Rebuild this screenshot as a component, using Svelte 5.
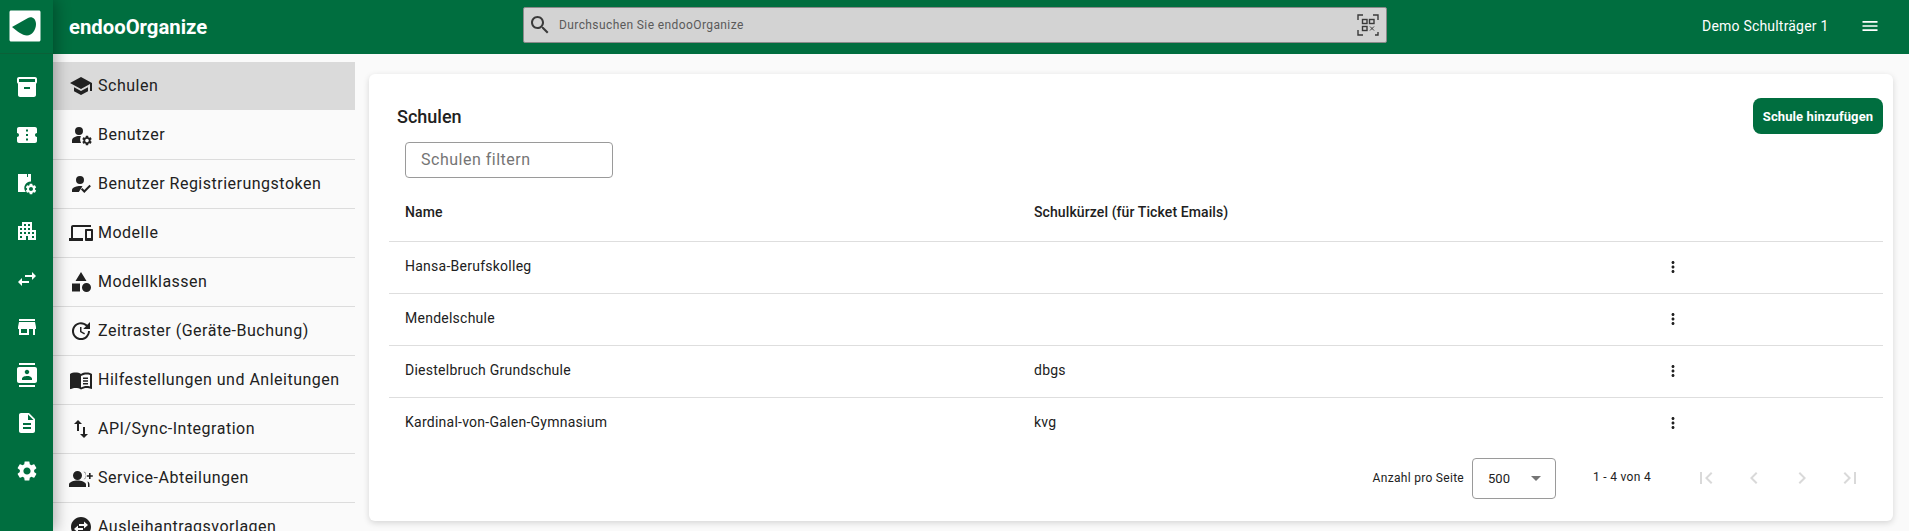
<script lang="ts">
	const gear = 'M19.14 12.94c.04-.3.06-.61.06-.94 0-.32-.02-.64-.07-.94l2.03-1.58c.18-.14.23-.41.12-.61l-1.92-3.32c-.12-.22-.37-.29-.59-.22l-2.39.96c-.5-.38-1.03-.7-1.62-.94l-.36-2.54c-.04-.24-.24-.41-.48-.41h-3.84c-.24 0-.43.17-.47.41l-.36 2.54c-.59.24-1.13.57-1.62.94l-2.39-.96c-.22-.08-.47 0-.59.22L2.74 8.87c-.12.21-.08.47.12.61l2.03 1.58c-.05.3-.09.63-.09.94s.02.64.07.94l-2.03 1.58c-.18.14-.23.41-.12.61l1.92 3.32c.12.22.37.29.59.22l2.39-.96c.5.38 1.03.7 1.62.94l.36 2.54c.05.24.24.41.48.41h3.84c.24 0 .44-.17.47-.41l.36-2.54c.59-.24 1.13-.56 1.62-.94l2.39.96c.22.08.47 0 .59-.22l1.92-3.32c.12-.22.07-.47-.12-.61l-2.01-1.58zM12 15.6c-1.98 0-3.6-1.62-3.6-3.6s1.62-3.6 3.6-3.6 3.6 1.62 3.6 3.6-1.62 3.6-3.6 3.6z';

	const railIcons = [
		'M20 2H4c-1 0-2 .9-2 2v3.01c0 .72.43 1.34 1 1.69V20c0 1.1 1.1 2 2 2h14c.9 0 2-.9 2-2V8.7c.57-.35 1-.96 1-1.69V4c0-1.1-1-2-2-2zm-5 12H9v-2h6v2zm5-7H4V4l16-.02V7z',
		'M22 10V6c0-1.11-.9-2-2-2H4c-1.1 0-1.99.89-1.99 2v4c1.1 0 1.99.9 1.99 2s-.89 2-2 2v4c0 1.1.9 2 2 2h16c1.1 0 2-.9 2-2v-4c-1.1 0-2-.9-2-2s.9-2 2-2zm-9 7.5h-2v-2h2v2zm0-4.5h-2v-2h2v2zm0-4.5h-2v-2h2v2z',
		'M3 3h9v3h1V3h3v7.400a6.500 6.500 0 0 0-5.200 10.600H3V3zm9 3h1v2h-1V6z',
		'M17 11V3H7v4H3v14h8v-4h2v4h8V11h-4zM7 19H5v-2h2v2zm0-4H5v-2h2v2zm0-4H5V9h2v2zm4 4H9v-2h2v2zm0-4H9V9h2v2zm0-4H9V5h2v2zm4 8h-2v-2h2v2zm0-4h-2V9h2v2zm0-4h-2V5h2v2zm4 12h-2v-2h2v2zm0-4h-2v-2h2v2z',
		'M6.99 11L3 15l3.99 4v-3H14v-2H6.99v-3zM21 9l-3.99-4v3H10v2h7.01v3L21 9z',
		'M20 4H4v2h16V4zm1 10v-2l-1-5H4l-1 5v2h1v6h10v-6h4v6h2v-6h1zm-9 4H6v-4h6v4z',
		'M20 0H4v2h16V0zM4 24h16v-2H4v2zM20 4H4c-1.1 0-2 .9-2 2v12c0 1.1.9 2 2 2h16c1.1 0 2-.9 2-2V6c0-1.1-.9-2-2-2zm-8 2.75c1.24 0 2.25 1.01 2.25 2.25s-1.01 2.25-2.25 2.25S9.75 10.24 9.75 9 10.76 6.75 12 6.75zM17 17H7v-1.5c0-1.67 3.33-2.5 5-2.5s5 .83 5 2.5V17z',
		'M14 2H6c-1.1 0-1.99.9-1.99 2L4 20c0 1.1.89 2 1.99 2H18c1.1 0 2-.9 2-2V8l-6-6zm2 16H8v-2h8v2zm0-4H8v-2h8v2zm-3-5V3.5L18.5 9H13z',
		gear
	];

	const navItems = [
		{ label: 'Schulen', active: true, d: 'M12 3L1 9l11 6 9-4.91V17h2V9L12 3zM5 13.18v4L12 21l7-3.82v-4L12 17l-7-3.82z' },
		{ label: 'Benutzer', d: 'M10 4a4 4 0 1 1 0 8 4 4 0 0 1 0-8zM3 20v-2.6c0-2.6 4-4.4 7-4.4.6 0 1.3.1 2 .2-.6 1-.9 2-.9 3.3 0 1.3.4 2.5 1 3.500H3z', gear: true },
		{ label: 'Benutzer Registrierungstoken', d: 'M11 4a4 4 0 1 1 0 8 4 4 0 0 1 0-8zM3 20v-2c0-2.7 5.3-4 8-4 .7 0 1.6.1 2.5.3L9.8 20H3zm12.300 1l-3.400-3.500 1.400-1.400 2 2 5.200-5.300 1.400 1.400-6.600 6.800z' },
		{ label: 'Modelle', d: 'M4 6h18V4H4c-1.1 0-2 .9-2 2v11H0v3h14v-3H4V6zm19 2h-6c-.55 0-1 .45-1 1v10c0 .55.45 1 1 1h6c.55 0 1-.45 1-1V9c0-.55-.45-1-1-1zm-1 9h-4v-7h4v7z' },
		{ label: 'Modellklassen', d: 'M12 2l-5.500 9h11L12 2zM3 13.500h8v8H3v-8zM17.500 13a4.500 4.500 0 1 1 0 9 4.500 4.500 0 0 1 0-9z' },
		{ label: 'Zeitraster (Geräte-Buchung)', d: 'M21 10.12h-6.78l2.74-2.82c-2.73-2.7-7.15-2.8-9.88-.1-2.73 2.71-2.73 7.08 0 9.79s7.15 2.71 9.88 0C18.32 15.65 19 14.08 19 12.1h2c0 1.98-.88 4.55-2.64 6.29-3.51 3.48-9.21 3.48-12.72 0-3.5-3.47-3.53-9.11-.02-12.58s9.14-3.47 12.65 0L21 3v7.12zM12.5 8v4.25l3.5 2.08-.72 1.21L11 13V8h1.5z' },
		{ label: 'Hilfestellungen und Anleitungen', d: 'M21 5c-1.11-.35-2.33-.5-3.5-.5-1.95 0-4.05.4-5.5 1.5-1.45-1.1-3.55-1.5-5.5-1.5S2.45 4.9 1 6v14.65c0 .25.25.5.5.5.1 0 .15-.05.25-.05C3.1 20.45 5.05 20 6.5 20c1.95 0 4.05.4 5.5 1.5 1.35-.85 3.8-1.5 5.5-1.5 1.65 0 3.35.3 4.75 1.05.1.05.15.05.25.05.25 0 .5-.25.5-.5V6c-.6-.45-1.25-.75-2-1zm0 13.5c-1.1-.35-2.3-.5-3.5-.5-1.7 0-4.15.65-5.5 1.5V8c1.35-.85 3.8-1.5 5.5-1.5 1.2 0 2.4.15 3.5.5v11.5zM14 9.500h5V11h-5V9.500zm0 2.700h5v1.500h-5v-1.500zm0 2.700h5v1.500h-5v-1.500z' },
		{ label: 'API/Sync-Integration', d: 'M16 17.01V10h-2v7.01h-3L15 21l4-3.99h-3zM9 3L5 6.99h3V14h2V6.99h3L9 3z' },
		{ label: 'Service-Abteilungen', d: 'M8.500 5a4.500 4.500 0 1 1 0 9 4.500 4.500 0 0 1 0-9zM0 21v-2.500C0 16 5 14.500 8.500 14.500S17 16 17 18.500V21H0zM14.500 13.500a4.500 4.500 0 0 0 0-8c2 .2 2.500 2 2.500 4s-.5 3.800-2.500 4zM18.500 15.500c1.500.7 2 1.500 2 3V21H19v-2.500c0-1.200-.2-2.200-.5-3zM20 13v-2.200h-2.200V9.200H20V7h1.600v2.200h2.200v1.600h-2.200V13H20z' },
		{ label: 'Ausleihantragsvorlagen', d: 'M12 2C6.48 2 2 6.48 2 12s4.48 10 10 10 10-4.48 10-10S17.52 2 12 2zm3 4.500L19 10l-4 3.500V11h-5V9h5V6.500zm-6 11L5 14l4-3.500V13h5v2H9v2.500z' }
	];

	const schools = [
		{ name: 'Hansa-Berufskolleg', code: '' },
		{ name: 'Mendelschule', code: '' },
		{ name: 'Diestelbruch Grundschule', code: 'dbgs' },
		{ name: 'Kardinal-von-Galen-Gymnasium', code: 'kvg' }
	];

	const pageIcons = [
		'M18.41 16.59L13.82 12l4.59-4.59L17 6l-6 6 6 6zM6 6h2v12H6z',
		'M15.41 7.41L14 6l-6 6 6 6 1.41-1.41L10.83 12z',
		'M10 6L8.59 7.41 13.17 12l-4.58 4.59L10 18l6-6z',
		'M5.59 7.41L10.18 12l-4.59 4.59L7 18l6-6-6-6zM16 6h2v12h-2z'
	];
</script>

<div class="app">
	<aside class="rail">
		<div class="logo">
			<svg viewBox="0 0 32 32" width="32" height="32">
				<path fill="#fff" d="M2 .5h28c.8 0 1.500.7 1.500 1.500v28c0 .8-.7 1.500-1.500 1.500H2c-.8 0-1.500-.7-1.500-1.500V2C.5 1.200 1.200.5 2 .5z" />
				<path fill="#006e3f" d="M3 17L19 8C23 6 27 9 27 14 27 20 23 25.500 18 25.500 13 25.500 8 21 3 17z" />
			</svg>
		</div>
		<nav class="rail-nav">
			{#each railIcons as d, i}
				<div class="rail-item">
					<svg viewBox="0 0 24 24" width="24" height="24">
						<path fill="#fff" {d} />
						{#if i === 2}
							<path fill="#fff" transform="translate(9.400 11.400) scale(.55)" d={gear} />
						{/if}
					</svg>
				</div>
			{/each}
		</nav>
	</aside>

	<div class="main">
		<header class="topbar">
			<div class="brand">endooOrganize</div>
			<div class="search">
				<svg class="search-icon" viewBox="0 0 24 24" width="24" height="24">
					<path fill="#3a3a3a" d="M15.500 14h-.79l-.28-.27C15.410 12.590 16 11.110 16 9.500 16 5.910 13.090 3 9.500 3S3 5.910 3 9.500 5.910 16 9.500 16c1.610 0 3.090-.59 4.230-1.570l.27.28v.79l5 4.990L20.490 19l-4.990-5zm-6 0C7.010 14 5 11.990 5 9.500S7.010 5 9.500 5 14 7.010 14 9.500 11.990 14 9.500 14z" />
				</svg>
				<span class="search-text">Durchsuchen Sie endooOrganize</span>
				<svg class="qr" viewBox="0 0 24 24" width="24" height="24" fill="none" stroke="#3a3a3a" stroke-width="1.400">
					<path d="M2 7V2h5M17 2h5v5M2 17v5h5M22 19v3h-3" />
					<rect x="6.500" y="6.500" width="4.500" height="4" />
					<rect x="13.500" y="6.500" width="4.500" height="4" />
					<rect x="6.500" y="13.500" width="4.500" height="4" />
					<path stroke-width="1" d="M14 13.500l4 4M18 13.500l-4 4" />
				</svg>
			</div>
			<div class="account">
				<span class="tenant">Demo Schulträger 1</span>
				<svg viewBox="0 0 24 24" width="20" height="20"><path fill="#fff" d="M3 18h18v-2H3v2zm0-5h18v-2H3v2zm0-7v2h18V6H3z" /></svg>
			</div>
		</header>

		<div class="body">
			<nav class="sidebar">
				{#each navItems as item}
					<div class={['nav-item', { active: item.active }]}>
						<svg viewBox="0 0 24 24" width="24" height="24">
							<path fill="#212121" d={item.d} />
							{#if item.gear}
								<path fill="#212121" transform="translate(12 11.500) scale(.5)" d={gear} />
							{/if}
						</svg>
						<span>{item.label}</span>
					</div>
				{/each}
			</nav>

			<main class="content">
				<section class="card">
					<div class="card-head">
						<div class="card-title">
							<h2>Schulen</h2>
							<div class="filter">Schulen filtern</div>
						</div>
						<button class="add">Schule hinzufügen</button>
					</div>

					<div class="table">
						<div class="row head">
							<div>Name</div>
							<div>Schulkürzel (für Ticket Emails)</div>
							<div></div>
						</div>
						{#each schools as school}
							<div class="row">
								<div>{school.name}</div>
								<div>{school.code}</div>
								<div class="more">
									<svg viewBox="0 0 24 24" width="18" height="18"><path fill="#212121" d="M12 8c1.100 0 2-.9 2-2s-.9-2-2-2-2 .9-2 2 .9 2 2 2zm0 2c-1.100 0-2 .9-2 2s.9 2 2 2 2-.9 2-2-.9-2-2-2zm0 6c-1.100 0-2 .9-2 2s.9 2 2 2 2-.9 2-2-.9-2-2-2z" /></svg>
								</div>
							</div>
						{/each}
					</div>

					<div class="paginator">
						<span class="per-page">Anzahl pro Seite</span>
						<div class="select">
							<span>500</span>
							<i class="caret"></i>
						</div>
						<span class="range">1 - 4 von 4</span>
						<div class="pages">
							{#each pageIcons as d}
								<svg viewBox="0 0 24 24" width="24" height="24"><path fill="#d9d9d9" {d} /></svg>
							{/each}
						</div>
					</div>
				</section>
			</main>
		</div>
	</div>
</div>

<style>
	:global(body) {
		margin: 0;
		background: #fafafa;
		font-family: Roboto, 'Liberation Sans', sans-serif;
		color: #212121;
	}

	.app {
		display: flex;
		height: 531px;
		overflow: hidden;
	}

	.rail {
		position: relative;
		z-index: 2;
		flex: 0 0 53px;
		background: #006e3f;
		box-shadow: 3px 0 14px rgba(0, 0, 0, 0.3);
	}

	.logo {
		display: flex;
		align-items: center;
		justify-content: center;
		height: 54px;
		padding: 0 3px 1px 0;
		border-bottom: 1px solid #0b6138;
		box-sizing: border-box;
	}

	.rail-nav {
		display: flex;
		flex-direction: column;
		padding-top: 8.500px;
	}

	.rail-item {
		display: flex;
		align-items: center;
		justify-content: center;
		height: 48px;
	}

	.main {
		flex: 1;
		min-width: 0;
	}

	.topbar {
		display: flex;
		align-items: center;
		height: 54px;
		background: #006e3f;
		color: #fff;
	}

	.brand {
		flex: 0 0 470px;
		padding-left: 16px;
		box-sizing: border-box;
		font-size: 20.300px;
		font-weight: 700;
	}

	.search {
		display: flex;
		align-items: center;
		align-self: flex-start;
		width: 864px;
		height: 36px;
		margin-top: 7px;
		box-sizing: border-box;
		border: 1px solid #8a8a8a;
		border-radius: 2px;
		background: #d3d3d3;
		padding: 0 6px 0 4px;
	}

	.search-text {
		flex: 1;
		margin-left: 7px;
		font-size: 12px;
		letter-spacing: 0.4px;
		color: #5a5a5a;
	}

	.account {
		display: flex;
		align-items: center;
		margin-left: auto;
		padding: 0 29.500px 3px 0;
		gap: 31px;
	}

	.tenant {
		font-size: 14px;
		letter-spacing: 0.2px;
	}

	.body {
		display: flex;
		height: 477px;
	}

	.sidebar {
		flex: 0 0 302px;
		padding-top: 8px;
	}

	.nav-item {
		display: flex;
		align-items: center;
		gap: 5px;
		height: 48px;
		padding-left: 16px;
		border-bottom: 1px solid #dcdcdc;
		font-size: 16px;
		letter-spacing: 0.5px;
	}

	.nav-item span {
		padding-bottom: 2px;
	}

	.nav-item.active {
		background: #dadada;
		border-bottom: 0;
		margin-bottom: 1px;
	}

	.content {
		flex: 1;
		padding: 20px 16px 10px 14px;
		min-width: 0;
	}

	.card {
		height: 100%;
		box-sizing: border-box;
		background: #fff;
		border-radius: 6px;
		box-shadow: 0 2px 6px rgba(0, 0, 0, 0.15);
		padding: 0 10px 0 20px;
	}

	.card-head {
		display: flex;
		justify-content: space-between;
		align-items: flex-start;
		padding: 24px 0 0 8px;
	}

	.card-title h2 {
		margin: 0;
		padding-top: 5px;
		font-size: 18px;
		font-weight: 500;
		line-height: 28px;
	}

	.filter {
		width: 208px;
		height: 36px;
		margin: 11px 0 0 8px;
		box-sizing: border-box;
		border: 1px solid #9a9a9a;
		border-radius: 4px;
		padding: 0 15px;
		font-size: 16px;
		letter-spacing: 0.5px;
		line-height: 34px;
		color: #757575;
	}

	.add {
		height: 36px;
		width: 130px;
		padding: 0;
		border: 0;
		border-radius: 8px;
		background: #006e3f;
		color: #fff;
		font-family: inherit;
		font-size: 13px;
		font-weight: 700;
		letter-spacing: 0.1px;
	}

	.row {
		display: grid;
		grid-template-columns: 629px 630px 1fr;
		align-items: center;
		height: 52px;
		box-sizing: border-box;
		padding: 0 0 3px 16px;
		border-bottom: 1px solid #dedede;
		font-size: 14px;
		letter-spacing: 0.25px;
	}

	.row:last-child {
		border-bottom-color: transparent;
	}

	.row.head {
		height: 64px;
		padding: 4px 0 0 16px;
		font-weight: 500;
		letter-spacing: 0.1px;
	}

	.more {
		display: flex;
		width: 18px;
		padding-top: 2px;
	}

	.paginator {
		display: flex;
		align-items: center;
		justify-content: flex-end;
		font-size: 12px;
		letter-spacing: 0.3px;
		height: 56px;
	}

	.select {
		display: flex;
		align-items: center;
		justify-content: space-between;
		width: 84px;
		height: 41px;
		margin-left: 8px;
		box-sizing: border-box;
		border: 1px solid #9a9a9a;
		border-radius: 4px;
		padding: 0 14px 0 15px;
		font-size: 13px;
		letter-spacing: 0;
	}

	.caret {
		width: 0;
		height: 0;
		border: 5px solid transparent;
		border-top-color: #757575;
		border-bottom: 0;
	}

	.range {
		margin: 0 43px 2px 37px;
		font-size: 12px;
	}

	.pages {
		display: flex;
		gap: 24px;
		padding-right: 21px;
	}
</style>
